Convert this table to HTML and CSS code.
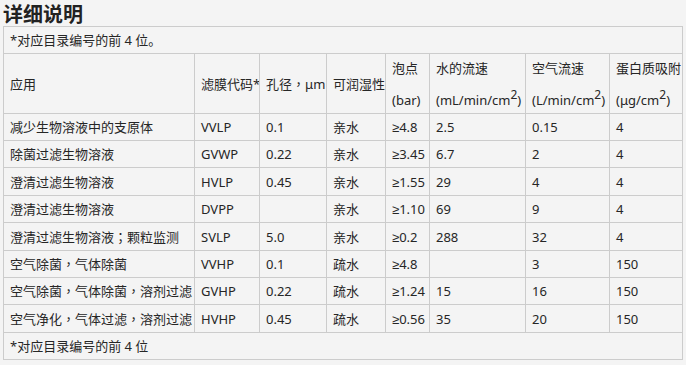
FILE: index.html
```html
<!DOCTYPE html>
<html lang="zh-CN">
<head>
<meta charset="utf-8">
<title>详细说明</title>
<link rel="stylesheet" href="styles.css">
</head>
<body>
<h2 class="title">详细说明</h2>
<table class="spec">
  <colgroup>
    <col class="c1"><col class="c2"><col class="c3"><col class="c4"><col class="c5"><col class="c6"><col class="c7"><col class="c8">
  </colgroup>
  <tbody>
    <tr class="note-row"><td colspan="8">*对应目录编号的前 4 位。</td></tr>
    <tr class="head-row">
      <td>应用</td>
      <td>滤膜代码*</td>
      <td>孔径<span class="p" lang="zh-TW">，</span>μm</td>
      <td>可润湿性</td>
      <td><span class="l1">泡点</span><span class="l2">(bar)</span></td>
      <td><span class="l1">水的流速</span><span class="l2">(mL/min/cm<sup>2</sup>)</span></td>
      <td><span class="l1">空气流速</span><span class="l2">(L/min/cm<sup>2</sup>)</span></td>
      <td><span class="l1">蛋白质吸附</span><span class="l2">(μg/cm<sup>2</sup>)</span></td>
    </tr>
    <tr class="r27"><td>减少生物溶液中的支原体</td><td>VVLP</td><td>0.1</td><td>亲水</td><td>≥4.8</td><td>2.5</td><td>0.15</td><td>4</td></tr>
    <tr class="r27"><td>除菌过滤生物溶液</td><td>GVWP</td><td>0.22</td><td>亲水</td><td>≥3.45</td><td>6.7</td><td>2</td><td>4</td></tr>
    <tr class="r28"><td>澄清过滤生物溶液</td><td>HVLP</td><td>0.45</td><td>亲水</td><td>≥1.55</td><td>29</td><td>4</td><td>4</td></tr>
    <tr class="r27"><td>澄清过滤生物溶液</td><td>DVPP</td><td></td><td>亲水</td><td>≥1.10</td><td>69</td><td>9</td><td>4</td></tr>
    <tr class="r28"><td>澄清过滤生物溶液<span class="p" lang="zh-TW">；</span>颗粒监测</td><td>SVLP</td><td>5.0</td><td>亲水</td><td>≥0.2</td><td>288</td><td>32</td><td>4</td></tr>
    <tr class="r27"><td>空气除菌<span class="p" lang="zh-TW">，</span>气体除菌</td><td>VVHP</td><td>0.1</td><td>疏水</td><td>≥4.8</td><td></td><td>3</td><td>150</td></tr>
    <tr class="r27"><td>空气除菌<span class="p" lang="zh-TW">，</span>气体除菌<span class="p" lang="zh-TW">，</span>溶剂过滤</td><td>GVHP</td><td>0.22</td><td>疏水</td><td>≥1.24</td><td>15</td><td>16</td><td>150</td></tr>
    <tr class="r28"><td>空气净化<span class="p" lang="zh-TW">，</span>气体过滤<span class="p" lang="zh-TW">，</span>溶剂过滤</td><td>HVHP</td><td>0.45</td><td>疏水</td><td>≥0.56</td><td>35</td><td>20</td><td>150</td></tr>
    <tr class="note-row"><td colspan="8">*对应目录编号的前 4 位</td></tr>
  </tbody>
</table>
</body>
</html>
```
FILE: styles.css
```css
html, body {
  margin: 0;
  padding: 0;
  background: #f4f4f4;
}
body {
  padding: 0 3px;
  color: #262626;
  font-family: "Noto Sans", "Liberation Sans", "Noto Sans CJK SC", sans-serif;
  font-size: 13px;
}
.title {
  margin: 0;
  padding-top: 1px;
  font-size: 20px;
  line-height: 25px;
  font-weight: bold;
  color: #222;
  font-family: "Noto Sans CJK SC", sans-serif;
}
.spec {
  width: 680px;
  table-layout: fixed;
  border-collapse: collapse;
  border: 1px solid #cccccc;
}
.c1 { width: 191px; }
.c2 { width: 65px; }
.c3 { width: 67px; }
.c4 { width: 59px; }
.c5 { width: 44px; }
.c6 { width: 96px; }
.c7 { width: 84px; }
.c8 { width: 73px; }
.spec td {
  border: 1px solid #cccccc;
  padding: 0 0 0 6px;
  white-space: nowrap;
  overflow: hidden;
  vertical-align: middle;
  line-height: 20px;
}
.p {
  font-family: "Noto Sans CJK TC", "Noto Sans CJK SC", sans-serif;
}
.note-row td { height: 26px; }
.head-row td { height: 59px; }
.r27 td { height: 26px; }
.r28 td { height: 27px; }
.l1, .l2 { display: block; }
.l2 { margin-top: 12px; }
sup {
  font-size: 12px;
  vertical-align: 6px;
  line-height: 0;
}
```
